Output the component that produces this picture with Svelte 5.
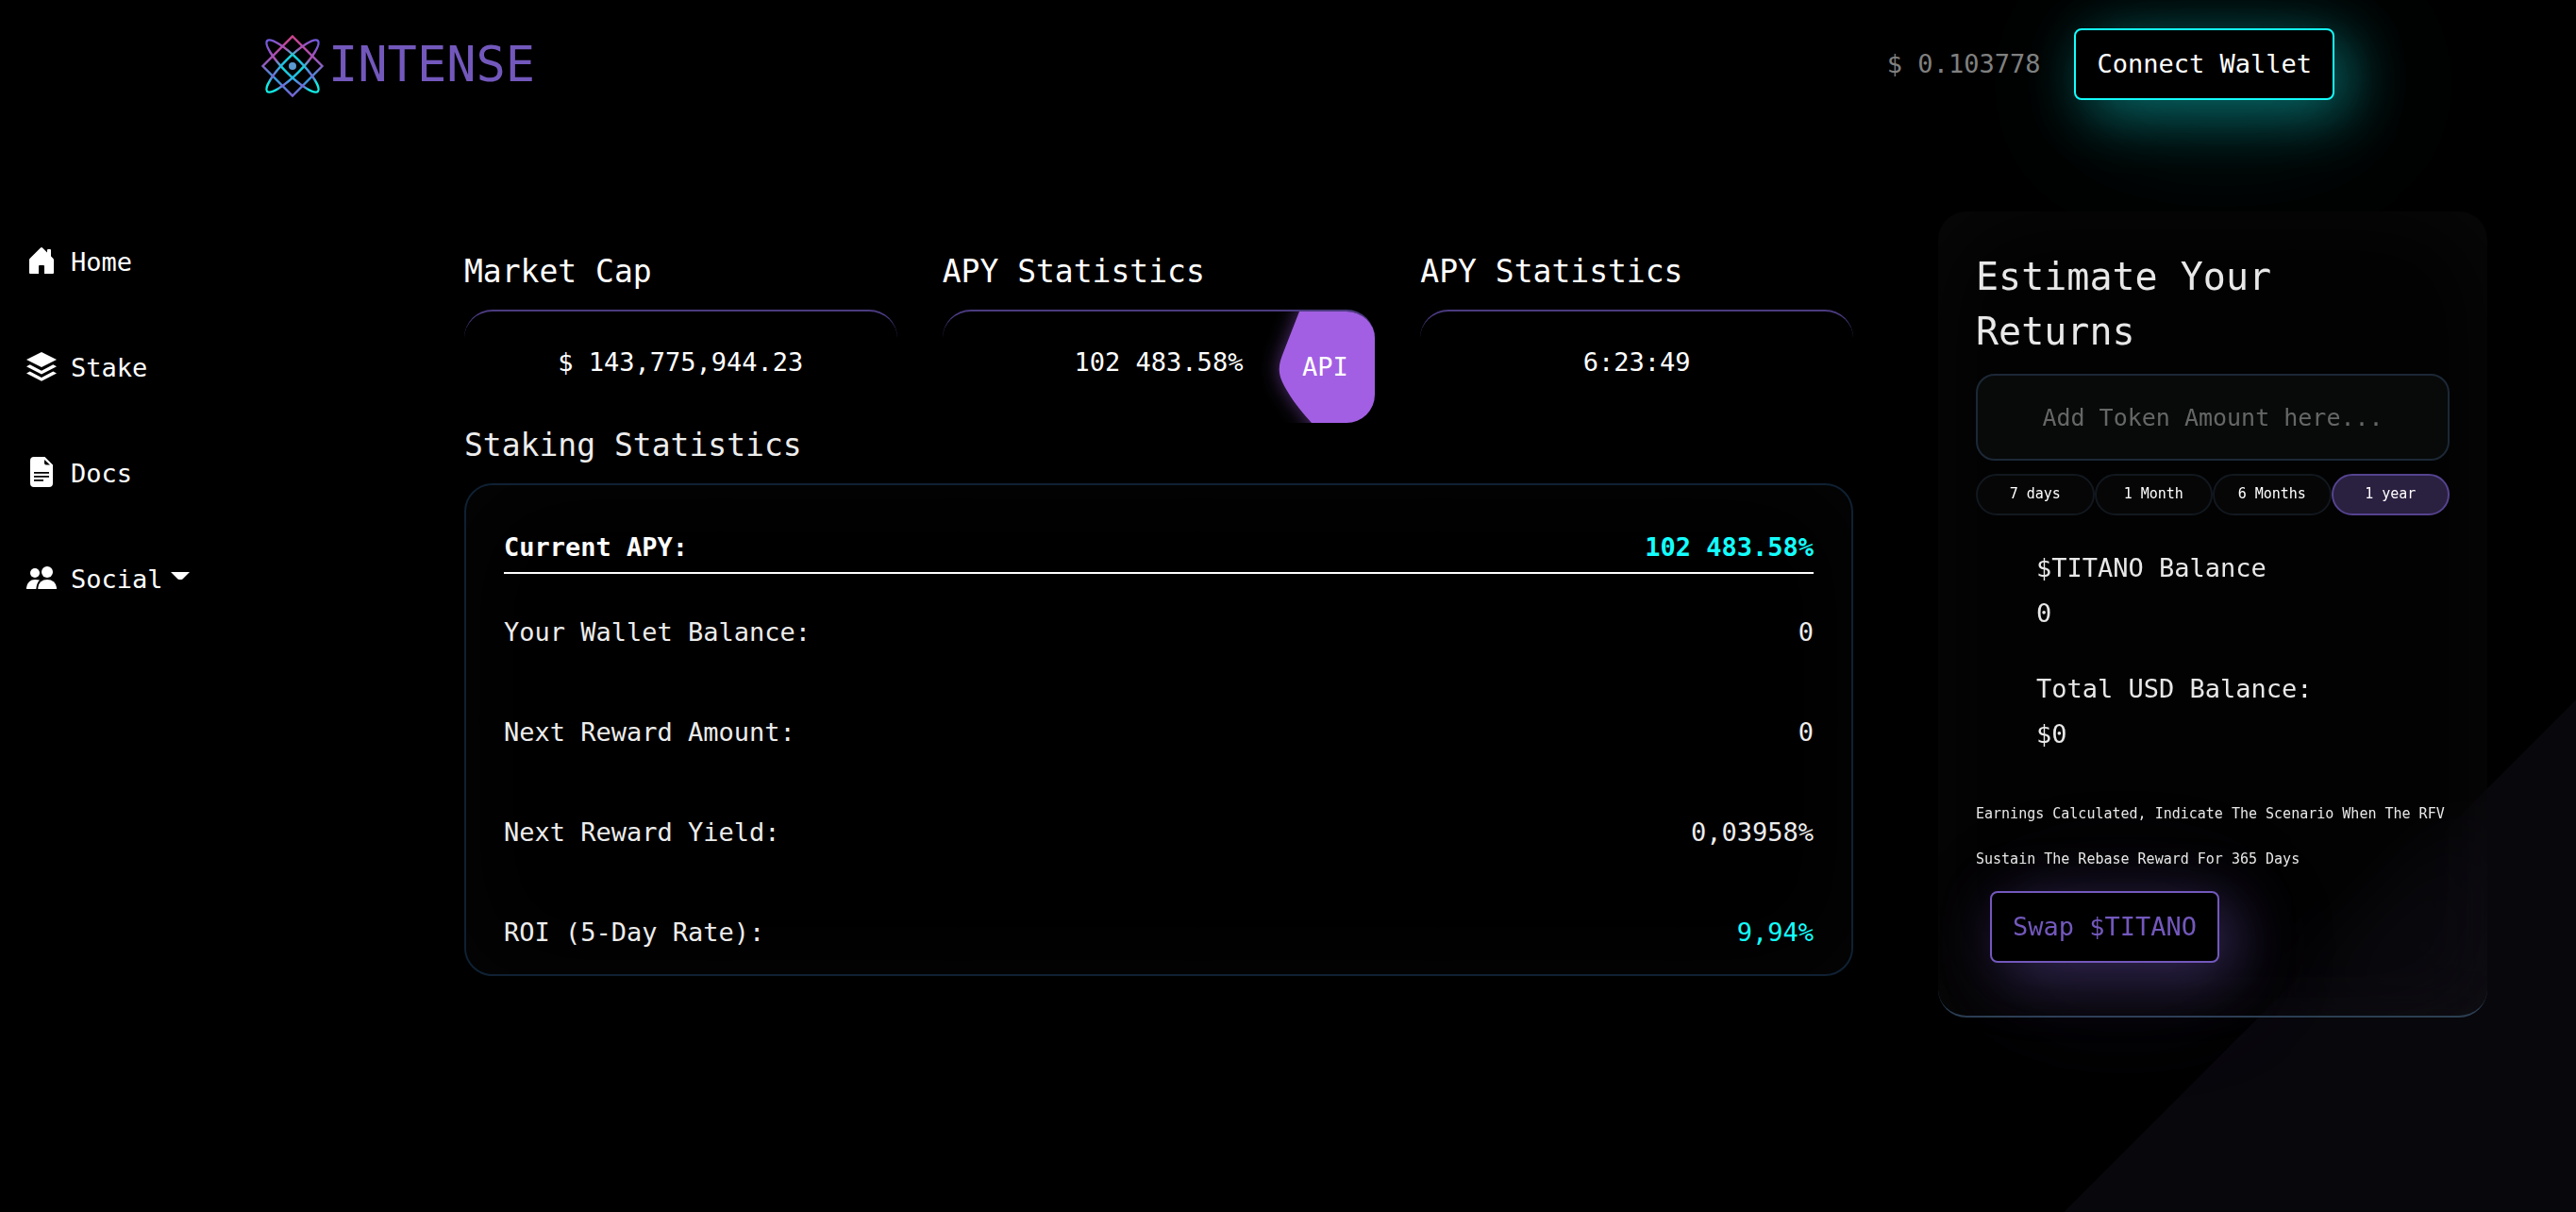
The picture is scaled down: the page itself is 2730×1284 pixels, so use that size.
<script>
  const stats = [
    { title: 'Market Cap', value: '$ 143,775,944.23' },
    { title: 'APY Statistics', value: '102 483.58%', badge: 'API' },
    { title: 'APY Statistics', value: '6:23:49' }
  ];

  const rows = [
    { label: 'Your Wallet Balance:', value: '0' },
    { label: 'Next Reward Amount:', value: '0' },
    { label: 'Next Reward Yield:', value: '0,03958%' },
    { label: 'ROI (5-Day Rate):', value: '9,94%', accent: true }
  ];

  const periods = ['7 days', '1 Month', '6 Months', '1 year'];
  let period = $state('1 year');
  let amount = $state('');
</script>

<div class="page">
  <header class="topbar">
    <a class="brand" href="#home">
      <svg class="logo" viewBox="-34 -34 68 68" aria-hidden="true">
        <defs>
          <linearGradient id="diamond" gradientUnits="userSpaceOnUse" x1="0" y1="-32" x2="0" y2="32">
            <stop offset="0" stop-color="#d0458c" />
            <stop offset="0.3" stop-color="#b04fb0" />
            <stop offset="0.5" stop-color="#8a62c4" />
            <stop offset="0.7" stop-color="#2f9fe0" />
            <stop offset="1" stop-color="#7b62d4" />
          </linearGradient>
          <linearGradient id="orbit" gradientUnits="userSpaceOnUse" x1="-38" y1="0" x2="38" y2="0">
            <stop offset="0" stop-color="#6f5be0" />
            <stop offset="0.25" stop-color="#b04fb0" />
            <stop offset="0.42" stop-color="#12d8dc" />
            <stop offset="0.62" stop-color="#28b8e6" />
            <stop offset="0.8" stop-color="#7b62d4" />
            <stop offset="0.9" stop-color="#12e8e4" />
            <stop offset="1" stop-color="#12f0e8" />
          </linearGradient>
        </defs>
        <g fill="none" stroke-width="2.400">
          <path d="M0-31.500 31.500 0 0 31.500-31.500 0Z" stroke="url(#diamond)" />
          <ellipse rx="38" ry="9" transform="rotate(45)" stroke="url(#orbit)" />
          <ellipse rx="38" ry="9" transform="rotate(135)" stroke="url(#orbit)" />
        </g>
        <circle r="4" fill="#5c9bd0" />
      </svg>
      <span>INTENSE</span>
    </a>
    <div class="account">
      <span class="price">$ 0.103778</span>
      <button class="btn connect" type="button">Connect Wallet</button>
    </div>
  </header>

  <div class="body">
    <nav class="sidebar" aria-label="Main">
      <a href="#home">
        <svg class="icon" viewBox="0 0 32 32" aria-hidden="true">
          <path d="M15 2.500Q16 1.500 17 2.500L22 7.500V5Q22 4 23 4H25Q26 4 26 5V11.500L28.300 13.800Q29 14.500 29 15.500V29Q29 30 28 30H19V22Q19 21 18 21H14Q13 21 13 22V30H4Q3 30 3 29V15.500Q3 14.500 3.700 13.800Z" />
        </svg>
        Home
      </a>
      <a href="#stake">
        <svg class="icon" viewBox="0 0 32 32" aria-hidden="true">
          <path d="M16 1 32 9 16 17 0 9Z" />
          <path d="M0 16.300 3.700 14.300 16 20.700 28.300 14.300 32 16.300 16 24.600Z" />
          <path d="M0 23.600 3.700 21.600 16 28 28.300 21.600 32 23.600 16 31.700Z" />
        </svg>
        Stake
      </a>
      <a href="#docs">
        <svg class="icon" viewBox="0 0 32 32" aria-hidden="true">
          <path fill-rule="evenodd" d="M8 0H19.500L28 8.500V28A4 4 0 0 1 24 32H8A4 4 0 0 1 4 28V4A4 4 0 0 1 8 0ZM19 3V6.500A2 2 0 0 0 21 8.500H25ZM8 16V17.700H24V16ZM8 20V21.700H24V20ZM8 24V25.700H18V24Z" />
        </svg>
        Docs
      </a>
      <button type="button" aria-haspopup="true" aria-expanded="false">
        <svg class="icon" viewBox="0 0 32 32" aria-hidden="true">
          <circle cx="9" cy="11" r="5" />
          <circle cx="22" cy="10" r="6" />
          <path d="M0 28V26.500Q1.500 18 9 18Q12 18 14 18.600Q10.800 22 10.300 28Z" />
          <path d="M12.300 28V26.500Q13.500 18 22 18Q30.500 18 32 26.500V28Z" />
        </svg>
        Social
        <svg class="caret" viewBox="0 0 20 8" aria-hidden="true">
          <path d="M0 0H20L12.500 7.500Q10 8.500 7.500 7.500Z" />
        </svg>
      </button>
    </nav>

    <main>
      <section class="stats">
        {#each stats as stat}
          <article>
            <h2>{stat.title}</h2>
            <div class="stat">
              <span>{stat.value}</span>
              {#if stat.badge}
                <button class="badge" type="button">
                  <svg viewBox="0 0 144 118" aria-hidden="true">
                    <path d="M64 0 48 41C41 58 40 66 51 84 60 99 69 109 77 118V160H190V-40H80Z" />
                  </svg>
                  <span>{stat.badge}</span>
                </button>
              {/if}
            </div>
          </article>
        {/each}
      </section>

      <h2 class="staking-title">Staking Statistics</h2>
      <section class="panel">
        <table>
          <thead>
            <tr>
              <th scope="col">Current APY:</th>
              <th scope="col" class="accent">102 483.58%</th>
            </tr>
          </thead>
          <tbody>
            {#each rows as row}
              <tr>
                <td>{row.label}</td>
                <td class:accent={row.accent}>{row.value}</td>
              </tr>
            {/each}
          </tbody>
        </table>
      </section>
    </main>

    <aside class="estimate">
      <h1>Estimate Your Returns</h1>
      <input type="text" aria-label="Token amount" placeholder="Add Token Amount here..." bind:value={amount} />
      <div class="periods" role="group" aria-label="Period">
        {#each periods as p}
          <button type="button" aria-pressed={period === p} class:active={period === p} onclick={() => (period = p)}>{p}</button>
        {/each}
      </div>
      <dl>
        <div>
          <dt>$TITANO Balance</dt>
          <dd>0</dd>
        </div>
        <div>
          <dt>Total USD Balance:</dt>
          <dd>$0</dd>
        </div>
      </dl>
      <p>Earnings Calculated, Indicate The Scenario When The RFV Sustain The Rebase Reward For 365 Days</p>
      <button class="btn swap" type="button">Swap $TITANO</button>
    </aside>
  </div>
</div>

<style>
  :global(body) {
    background: #000;
  }

  .page {
    box-sizing: border-box;
    min-height: 100vh;
    background: linear-gradient(135deg, #000 50%, #08070c 50%) no-repeat right bottom / 542px 542px #000;
    color: #fff;
    font: 27px/48px "DejaVu Sans Mono", monospace;
  }

  .page :global(*) {
    box-sizing: border-box;
  }

  button,
  input {
    font: inherit;
    color: inherit;
  }

  button {
    cursor: pointer;
  }

  a {
    color: inherit;
    text-decoration: none;
  }

  h1,
  h2,
  p,
  dl,
  dd {
    margin: 0;
    font-weight: 400;
  }

  .topbar {
    display: flex;
    align-items: center;
    justify-content: space-between;
    height: 136px;
    padding: 0 256px 0 276px;
  }

  .brand {
    display: flex;
    align-items: center;
    gap: 4px;
    color: #7358bc;
    font-size: 52px;
  }

  .logo {
    width: 68px;
    height: 68px;
    margin-top: 4px;
  }

  .account {
    display: flex;
    align-items: center;
    gap: 36px;
  }

  .price {
    color: #808080;
  }

  .btn {
    display: block;
    height: 76px;
    padding: 0 22px;
    border: 2px solid;
    border-radius: 8px;
    background: #000;
  }

  .connect {
    border-color: #14ffff;
    box-shadow:
      14px 14px 64px rgba(20, 255, 255, 0.42),
      20px 20px 140px rgba(20, 255, 255, 0.14);
  }

  .swap {
    margin: 10px 0 0 15px;
    border-color: #7358bc;
    color: #7358bc;
    box-shadow:
      14px 14px 64px rgba(115, 88, 188, 0.45),
      20px 20px 140px rgba(115, 88, 188, 0.14);
  }

  .body {
    display: grid;
    grid-template-columns: 402px minmax(0, 1fr) 582px;
    column-gap: 90px;
    align-items: start;
    padding: 88px 94px 0 0;
  }

  .sidebar {
    display: flex;
    flex-direction: column;
    gap: 64px;
    padding: 30px 0 0 28px;
  }

  .sidebar a,
  .sidebar button {
    display: flex;
    align-items: center;
    gap: 15px;
    padding: 0;
    border: 0;
    background: none;
  }

  .icon {
    width: 32px;
    height: 32px;
    margin-bottom: 4px;
    fill: #fff;
  }

  .caret {
    width: 20px;
    height: 8px;
    margin: 0 0 8px -7px;
    fill: #fff;
  }

  main {
    padding-top: 40px;
  }

  h2 {
    font-size: 33px;
    line-height: 48px;
  }

  .stats {
    display: grid;
    grid-template-columns: repeat(3, minmax(0, 1fr));
    gap: 48px;
  }

  .stat {
    position: relative;
    height: 120px;
    margin-top: 16px;
    padding-top: 30px;
    overflow: hidden;
    border-top: 2px solid #4b3a80;
    border-radius: 30px;
    text-align: center;
  }

  .badge {
    position: absolute;
    top: 0;
    right: 0;
    width: 144px;
    height: 118px;
    padding: 0 26px 0 64px;
    border: 0;
    background: none;
  }

  .badge svg {
    position: absolute;
    inset: 0;
    width: 144px;
    height: 118px;
    fill: #a25fe3;
    filter: drop-shadow(0 0 10px rgba(162, 95, 227, 0.5));
    overflow: visible;
  }

  .badge span {
    position: relative;
  }

  .staking-title {
    color: #ececec;
  }

  .panel {
    margin-top: 16px;
    padding: 42px 40px 0;
    border: 2px solid #0f2133;
    border-radius: 30px;
    box-shadow: inset 0 0 120px rgba(255, 255, 255, 0.018);
  }

  table {
    width: 100%;
    border-spacing: 0;
  }

  th,
  td {
    padding: 0;
    text-align: left;
  }

  th {
    padding-bottom: 2px;
    border-bottom: 2px solid #fff;
    font-weight: 700;
  }

  td {
    padding: 38px 0 20px;
    color: #ececec;
  }

  th:last-child,
  td:last-child {
    text-align: right;
  }

  th.accent,
  td.accent {
    color: #14ffff;
  }

  .estimate {
    padding: 40px 40px 56px;
    border-bottom: 2px solid #2b3f52;
    border-radius: 30px;
    background: rgba(255, 255, 255, 0.008);
    box-shadow: inset 0 0 120px rgba(255, 255, 255, 0.03);
    backdrop-filter: blur(40px);
    color: #e8e8e8;
  }

  h1 {
    font-size: 40px;
    line-height: 58px;
  }

  input {
    display: block;
    width: 100%;
    height: 92px;
    margin-top: 16px;
    padding: 0 24px;
    border: 2px solid #1c2836;
    border-radius: 20px;
    outline: 0;
    background: #080a0a;
    font-size: 25px;
    text-align: center;
  }

  input::placeholder {
    color: #666;
    opacity: 1;
  }

  .periods {
    display: grid;
    grid-template-columns: repeat(4, minmax(0, 1fr));
    margin-top: 14px;
  }

  .periods button {
    height: 44px;
    padding: 0 0 2px;
    border: 2px solid #12181f;
    border-radius: 22px;
    background: #060606;
    color: #fff;
    font-size: 15px;
    line-height: 24px;
  }

  .periods .active {
    border-color: #55438f;
    background: #2a2040;
  }

  dl {
    display: grid;
    gap: 32px;
    margin-top: 32px;
    padding-left: 64px;
  }

  p {
    margin-top: 36px;
    font-size: 15px;
  }

  @media (max-width: 1800px) {
    .topbar {
      padding: 0 40px;
    }

    .body {
      grid-template-columns: 200px minmax(0, 1fr);
      column-gap: 40px;
      padding: 40px;
    }

    .sidebar {
      padding-left: 0;
    }

    .estimate {
      grid-column: 2;
      margin-top: 40px;
    }
  }
</style>
